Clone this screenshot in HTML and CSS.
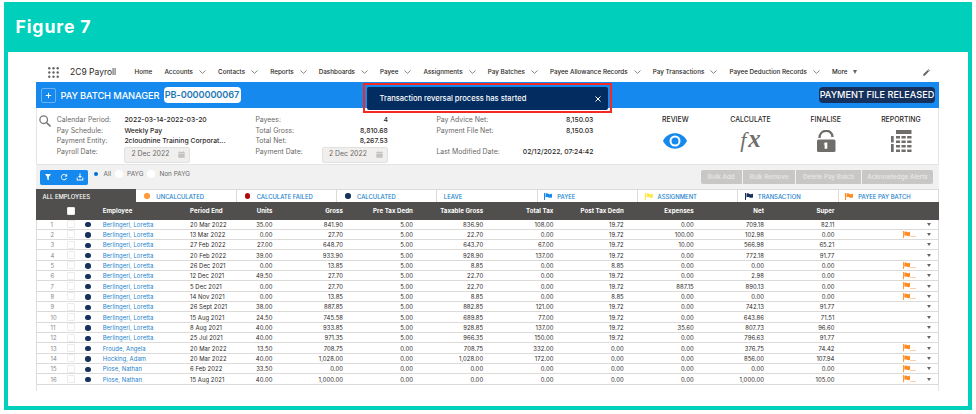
FILE: index.html
```
<!DOCTYPE html>
<html lang="en">

<head>
  <meta charset="UTF-8">
  <meta name="viewport" content="width=device-width, initial-scale=1.0">
  <title>2C9 Payroll</title>
  <link rel="stylesheet" href="styles.css">
</head>

<body>
  <!-- shared icons -->
  <svg class="sprite">
    <symbol id="chevron" viewBox="0 0 7 4"><path d="M.5 .5L3.5 3.3L6.500 .5" fill="none" stroke="#666" stroke-width=".8" /></symbol>
    <symbol id="flag" viewBox="0 0 8 8" preserveAspectRatio="none"><path d="M0 0H1V8H0ZM1.500 .7C3 .1 4 .5 4.700 1.100C5.600 1.600 6.800 1.400 8 .9V5C6.600 5.700 5.500 5.600 4.600 5.100C3.500 4.500 2.600 4.600 1.500 5.100Z" fill="currentColor" /></symbol>
    <symbol id="calendar" viewBox="0 0 7 7"><path d="M.3 1H6.700V2H.3ZM.3 2.500H6.700V6.800H.3ZM1.500 0H2.300V1H1.500ZM4.700 0H5.500V1H4.700Z" fill="#c4c2c0" /></symbol>
  </svg>

  <div class="figure">
    <h1 class="figure-title">Figure 7</h1>
    <div class="figure-body">
      <div class="app">
        <nav class="nav">
          <svg class="waffle" viewBox="0 0 11 11" fill="#666">
            <circle cx="1.300" cy="1.300" r="1.200" /><circle cx="5.500" cy="1.300" r="1.200" /><circle cx="9.700" cy="1.300" r="1.200" />
            <circle cx="1.300" cy="5.500" r="1.200" /><circle cx="5.500" cy="5.500" r="1.200" /><circle cx="9.700" cy="5.500" r="1.200" />
            <circle cx="1.300" cy="9.700" r="1.200" /><circle cx="5.500" cy="9.700" r="1.200" /><circle cx="9.700" cy="9.700" r="1.200" />
          </svg>
          <span class="app-name">2C9 Payroll</span>
          <span class="nav-item">Home</span>
          <span class="nav-item">Accounts <svg><use href="#chevron" /></svg></span>
          <span class="nav-item">Contacts <svg><use href="#chevron" /></svg></span>
          <span class="nav-item">Reports <svg><use href="#chevron" /></svg></span>
          <span class="nav-item">Dashboards <svg><use href="#chevron" /></svg></span>
          <span class="nav-item">Payee <svg><use href="#chevron" /></svg></span>
          <span class="nav-item">Assignments <svg><use href="#chevron" /></svg></span>
          <span class="nav-item">Pay Batches <svg><use href="#chevron" /></svg></span>
          <span class="nav-item">Payee Allowance Records <svg><use href="#chevron" /></svg></span>
          <span class="nav-item">Pay Transactions <svg><use href="#chevron" /></svg></span>
          <span class="nav-item">Payee Deduction Records <svg><use href="#chevron" /></svg></span>
          <span class="nav-item">More <i class="caret"></i></span>
          <svg class="pencil" viewBox="0 0 7 7"><path d="M0 7L.5 5L4.700 .9L6.100 2.300L2 6.500ZM5.100 .5L5.600 0L7 1.400L6.500 1.900Z" fill="#666" /></svg>
        </nav>

        <header class="banner">
          <svg class="plus" viewBox="0 0 15 15"><rect x=".5" y=".5" width="14" height="14" rx="1.500" fill="none" stroke="#7dbcf6" stroke-width=".8" /><path d="M7.500 4.800V10.200M4.800 7.500H10.200" stroke="#fff" stroke-width="1" /></svg>
          <span class="banner-title">PAY BATCH MANAGER</span>
          <span class="batch">PB-0000000067</span>
          <span class="status">PAYMENT FILE RELEASED</span>
          <div class="toast-outline">
            <div class="toast">
              <span>Transaction reversal process has started</span>
              <svg viewBox="0 0 6 6"><path d="M.5 .5L5.500 5.500M5.500 .5L.5 5.500" stroke="#fff" stroke-width="1" /></svg>
            </div>
          </div>
        </header>

        <section class="summary">
          <svg class="search" viewBox="0 0 12 12"><circle cx="4.700" cy="4.700" r="3.800" fill="none" stroke="#777" stroke-width="1.300" /><path d="M7.500 7.500L11 11" stroke="#777" stroke-width="1.700" stroke-linecap="round" /></svg>
          <dl class="facts facts-a">
            <dt>Calendar Period:</dt><dd>2022-03-14-2022-03-20</dd>
            <dt>Pay Schedule:</dt><dd>Weekly Pay</dd>
            <dt>Payment Entity:</dt><dd>2cloudnine Training Corporat...</dd>
            <dt>Payroll Date:</dt><dd class="date">2 Dec 2022 <svg><use href="#calendar" /></svg></dd>
          </dl>
          <dl class="facts facts-b">
            <dt>Payees:</dt><dd>4</dd>
            <dt>Total Gross:</dt><dd>8,810.68</dd>
            <dt>Total Net:</dt><dd>8,267.53</dd>
            <dt>Payment Date:</dt><dd class="date">2 Dec 2022 <svg><use href="#calendar" /></svg></dd>
          </dl>
          <dl class="facts facts-c">
            <dt>Pay Advice Net:</dt><dd>8,150.03</dd>
            <dt>Payment File Net:</dt><dd>8,150.03</dd>
            <dt></dt><dd></dd>
            <dt>Last Modified Date:</dt><dd>02/12/2022, 07:24:42</dd>
          </dl>
          <div class="actions">
            <div class="action">
              <span>REVIEW</span>
              <svg viewBox="0 0 24 22"><path d="M0 11C5 .8 19 .8 24 11C19 21.200 5 21.200 0 11Z" fill="#1589ee" /><circle cx="12" cy="11" r="5.500" fill="#fff" /><circle cx="12" cy="11" r="3.500" fill="#1589ee" /></svg>
            </div>
            <div class="action">
              <span>CALCULATE</span>
              <span class="fx"><i>f</i>x</span>
            </div>
            <div class="action">
              <span>FINALISE</span>
              <svg viewBox="0 0 24 22"><path d="M5.500 8C5.500 -1.300 18.500 -1.300 18.500 7" fill="none" stroke="#706e6b" stroke-width="2.400" /><rect x="3" y="9.500" width="18.500" height="12.500" rx="1.500" fill="#706e6b" /><path d="M10.600 12.500H13.300V18.700H10.600V14.500H9.800V13.500H10.600Z" fill="#fff" /></svg>
            </div>
            <div class="action">
              <span>REPORTING</span>
              <svg viewBox="0 0 24 22" fill="#706e6b"><path d="M7 0H22.500V4H7Z" /><path d="M2 6H4.700V12.500H2ZM2 14H4.700V22H2Z" /><path d="M7 6H11V8.500H7ZM12.500 6H16.700V8.500H12.500ZM18.200 6H22.500V8.500H18.200ZM7 10.400H11V13H7ZM12.500 10.400H16.700V13H12.500ZM18.200 10.400H22.500V13H18.200ZM7 15H11V17.500H7ZM12.500 15H16.700V17.500H12.500ZM18.200 15H22.500V17.500H18.200ZM7 19.400H11V22H7ZM12.500 19.400H16.700V22H12.500ZM18.200 19.400H22.500V22H18.200Z" /></svg>
            </div>
          </div>
        </section>

        <section class="toolbar">
          <div class="tools">
            <span><svg viewBox="0 0 8 8"><path d="M1 1H7L4.800 4V7.200L3.200 6.200V4Z" fill="#fff" /></svg></span>
            <span><svg viewBox="0 0 8 8"><path d="M6.300 2.600A2.700 2.700 0 1 0 6.600 5" fill="none" stroke="#fff" stroke-width="1" /><path d="M7.200 .8V3.600H4.500Z" fill="#fff" /></svg></span>
            <span><svg viewBox="0 0 8 8"><path d="M3.500 .5H4.500V3H6L4 5.300L2 3H3.500ZM.7 4.500H1.600V6.600H6.400V4.500H7.300V7.500H.7Z" fill="#fff" /></svg></span>
          </div>
          <div class="filters">
            <label class="checked"><i></i>All</label>
            <label><i></i>PAYG</label>
            <label><i></i>Non PAYG</label>
          </div>
          <div class="bulk">
            <span>Bulk Add</span><span>Bulk Remove</span><span>Delete Pay Batch</span><span>Acknowledge Alerts</span>
          </div>
        </section>

        <div class="tabs">
          <span class="tab active">ALL EMPLOYEES</span>
          <span class="tab"><i class="dot orange"></i>UNCALCULATED</span>
          <span class="tab"><i class="dot red"></i>CALCULATE FAILED</span>
          <span class="tab"><i class="dot navy"></i>CALCULATED</span>
          <span class="tab">LEAVE</span>
          <span class="tab"><svg class="flag blue"><use href="#flag" /></svg>PAYEE</span>
          <span class="tab"><svg class="flag yellow"><use href="#flag" /></svg>ASSIGNMENT</span>
          <span class="tab"><svg class="flag dark"><use href="#flag" /></svg>TRANSACTION</span>
          <span class="tab"><svg class="flag amber"><use href="#flag" /></svg>PAYEE PAY BATCH</span>
        </div>

        <div class="row head">
          <span></span><span><i class="check"></i></span><span></span><span>Employee</span><span>Period End</span>
          <span class="num">Units</span><span class="num">Gross</span><span class="num">Pre Tax Dedn</span><span class="num">Taxable Gross</span><span class="num">Total Tax</span>
          <span class="num">Post Tax Dedn</span><span class="num">Expenses</span><span class="num">Net</span><span class="num">Super</span>
        </div>
        <div id="rows"></div>
        <div class="app-end"></div>
      </div>
    </div>
  </div>

  <script src="script.js"></script>
</body>

</html>
```
FILE: styles.css
```
* {
  box-sizing: border-box;
}

body {
  margin: 0;
  padding: 2px 4px;
  background: #fff;
  color: #2b2826;
  font-family: Inter, 'Liberation Sans', sans-serif;
}

.sprite {
  display: none;
}

svg {
  display: block;
  flex: none;
}

.figure {
  height: 408px;
  border: 4px solid #00cfbb;
  border-top: 0;
  background: #00cfbb;
}

.figure-title {
  height: 50px;
  margin: 0;
  padding-left: 7.5px;
  color: #fff;
  font-size: 17.7px;
  font-weight: 700;
  letter-spacing: .85px;
  line-height: 49px;
}

.figure-body {
  height: 354px;
  padding: 10px 25px 0 28px;
  background: #fff;
}

.app {
  width: 903px;
}

/* navigation */
.nav {
  display: flex;
  align-items: center;
  height: 20px;
  padding-right: 9px;
}

.waffle {
  width: 11px;
  height: 11px;
  margin-left: 12px;
}

.app-name {
  width: 64.5px;
  margin-left: 11px;
  font-size: 8.5px;
  white-space: nowrap;
}

.nav-item {
  display: flex;
  align-items: center;
  gap: 6px;
  margin-right: 12.1px;
  font-size: 6.300px;
  font-weight: 500;
  white-space: nowrap;
}

.nav-item svg {
  width: 7px;
  height: 4px;
}

.caret {
  border: 2.8px solid transparent;
  border-top: 4px solid #666;
  border-bottom: 0;
}

.pencil {
  width: 7px;
  height: 7px;
  margin-left: auto;
}

/* banner */
.banner {
  position: relative;
  display: flex;
  align-items: center;
  height: 26px;
  padding: 0 4px 0 5px;
  background: #1589ee;
  color: #fff;
  white-space: nowrap;
}

.plus {
  width: 15px;
  height: 15px;
}

.banner-title {
  width: 103px;
  margin-left: 4.5px;
  font-size: 9.4px;
  font-weight: 500;
  letter-spacing: -.17px;
}

.batch,
.status {
  height: 16px;
  border-radius: 4px;
  line-height: 16px;
  text-align: center;
  font-weight: 500;
}

.batch {
  width: 77px;
  background: #fff;
  color: #1f78b4;
  font-size: 9.2px;
  font-weight: 600;
  letter-spacing: -.12px;
}

.status {
  width: 116px;
  margin-left: auto;
  background: #16325c;
  font-size: 9.2px;
}

.toast-outline {
  position: absolute;
  top: 1px;
  left: 327px;
  width: 249px;
  height: 30px;
  padding: 2px 2px 1px;
  border: 2px solid #f42a22;
}

.toast {
  display: flex;
  align-items: center;
  justify-content: space-between;
  height: 23px;
  padding: 0 7px 0 12.5px;
  border-radius: 2px;
  background: #032d60;
  font-size: 7.55px;
  font-weight: 500;
}

.toast svg {
  width: 6px;
  height: 6px;
}

/* summary */
.summary {
  display: flex;
  height: 56px;
  border: solid #e4e4e4;
  border-width: 0 1px;
}

.search {
  width: 12px;
  height: 12px;
  margin: 6.500px 0 0 2px;
}

.facts {
  display: grid;
  grid-template-rows: 10.5px 10.5px 10.5px 16px;
  align-content: start;
  margin: 7px 0 0;
  font-size: 6.9px;
  line-height: 10.5px;
  white-space: nowrap;
}

.facts dt {
  color: #6b6967;
}

.facts dd {
  margin: 0;
  font-size: 6.8px;
  font-weight: 500;
}

.facts-a {
  grid-template-columns: 67.7px 131px;
  margin-left: 5.7px;
}

.facts-b {
  grid-template-columns: 66.5px 66px;
}

.facts-c {
  grid-template-columns: 80px 77px;
  margin-left: 48.5px;
}

.facts-b dd:not(.date),
.facts-c dd {
  justify-self: end;
}

.facts .date {
  display: flex;
  align-items: center;
  justify-content: space-between;
  width: 66px;
  height: 16px;
  padding: 0 4px 0 6px;
  border: 1px solid #e2e1e0;
  border-radius: 2px;
  background: #f0efee;
  color: #6b6967;
  font-size: 6.9px;
  font-weight: 400;
}

.date svg {
  width: 7px;
  height: 7px;
}

.actions {
  display: flex;
  margin: 0 -.5px 0 auto;
}

.action {
  display: flex;
  flex-direction: column;
  align-items: center;
  width: 75.2px;
  padding-top: 7px;
  font-size: 6.9px;
  font-weight: 500;
  line-height: 10px;
}

.action svg {
  width: 24px;
  height: 22px;
  margin-top: 5px;
}

.fx {
  margin-top: 4px;
  color: #706e6b;
  font: italic 700 25px/20px 'Liberation Serif', serif;
}

.fx i {
  margin-right: 2px;
  font-size: 22px;
  font-weight: 400;
}

/* toolbar */
.toolbar {
  display: flex;
  height: 25px;
  padding: 4.5px 6px 0 4px;
  border-top: 1px solid #e4e4e4;
  background: #f1f1f1;
  white-space: nowrap;
}

.tools {
  display: flex;
  gap: .5px;
  width: 47.5px;
  height: 15px;
  border-radius: 2px;
  background: #7dbcf6;
  overflow: hidden;
}

.tools span {
  display: grid;
  flex: 1;
  place-items: center;
  background: #1589ee;
}

.tools svg {
  width: 8px;
  height: 8px;
}

.filters {
  display: flex;
  height: 9px;
  margin-left: 4px;
}

.filters label {
  display: flex;
  align-items: center;
  gap: 4px;
  margin-right: 4px;
  color: #6b6967;
  font-size: 6.4px;
}

.filters i {
  width: 8px;
  height: 8px;
  border-radius: 50%;
  background: #fff;
}

.filters .checked i {
  width: 4px;
  height: 4px;
  margin: 0 2px;
  background: #0070d2;
}

.bulk {
  display: flex;
  gap: 1px;
  height: 14.5px;
  margin-left: auto;
}

.bulk span {
  width: 41.5px;
  background: #c9c7c5;
  color: #e9e8e7;
  font-size: 6.3px;
  font-weight: 500;
  line-height: 14.5px;
  text-align: center;
}

.bulk span:nth-child(2) {
  width: 52px;
}

.bulk span:nth-child(3) {
  width: 65px;
}

.bulk span:nth-child(4) {
  width: 71px;
  border-radius: 0 2px 2px 0;
}

.bulk span:first-child {
  border-radius: 2px 0 0 2px;
}

/* tabs */
.tabs {
  display: grid;
  grid-template-columns: repeat(9, 1fr);
  height: 13px;
}

.tab {
  display: flex;
  align-items: center;
  padding-left: 6.5px;
  border: solid #dddbda;
  border-width: 1px 1px 0 0;
  color: #1b7fcc;
  font-size: 5.9px;
  font-weight: 500;
  white-space: nowrap;
}

.tab.active {
  border-color: #514f4d;
  background: #514f4d;
  color: #fff;
}

.dot {
  width: 5.5px;
  height: 5.5px;
  margin: 0 6.5px 0 1.5px;
  border-radius: 50%;
}

.flag {
  width: 8px;
  height: 7px;
  margin-right: 5px;
}

.orange {
  background: #ff9a3c;
}

.red {
  background: #b00a0a;
}

.navy {
  background: #16325c;
}

.blue {
  color: #1589ee;
}

.yellow {
  color: #ffe94a;
}

.dark {
  color: #16325c;
}

.amber {
  color: #ff8a1f;
}

/* employee rows */
.row {
  display: grid;
  grid-template-columns: 29px 13px 23.7px 87.3px 41px 41.5px 70.5px 70px 70.2px 70.3px 70.3px 70px 70.2px 70.5px 68.5px 21px 15px;
  align-items: center;
  height: 10.34px;
  border: solid #dddbda;
  border-width: 0 1px 1px;
  font-size: 5.9px;
  letter-spacing: .06px;
  white-space: nowrap;
}

.row > :first-child {
  padding-left: 13.5px;
  color: #8a8886;
}

.row.head {
  height: 17.5px;
  padding-top: 1px;
  border-color: #514f4d;
  background: #514f4d;
  color: #fff;
  font-size: 6.1px;
  font-weight: 700;
}

.num {
  text-align: right;
}

.check {
  display: block;
  width: 8px;
  height: 8px;
  margin-left: .5px;
  border: 1px solid #ecebea;
  border-radius: 1px;
  background: #fff;
}

.row .dot {
  display: block;
  margin: 1px 0 0 6px;
}

.row .name {
  color: #1b7fcc;
}

.alert {
  display: flex;
  align-items: center;
  color: #ff8a1f;
  font-weight: 700;
}

.alert .flag {
  width: 7px;
  height: 7.5px;
  margin: 0;
}

.row .caret {
  justify-self: start;
  margin-left: 3px;
  border-width: 3px 2.2px 0;
}

.app-end {
  height: 6px;
  border: solid #e4e4e4;
  border-width: 0 1px;
}
```
FILE: script.js
```
// employee, period end, units, gross, pre tax, taxable, tax, post tax, expenses, net, super, flagged
var employees = [
  ['Berlingeri, Loretta', '20 Mar 2022', '35.00', '841.90', '5.00', '836.90', '108.00', '19.72', '0.00', '709.18', '82.11', false],
  ['Berlingeri, Loretta', '13 Mar 2022', '0.00', '27.70', '5.00', '22.70', '0.00', '19.72', '100.00', '102.98', '0.00', true],
  ['Berlingeri, Loretta', '27 Feb 2022', '27.00', '648.70', '5.00', '643.70', '67.00', '19.72', '10.00', '566.98', '65.21', false],
  ['Berlingeri, Loretta', '20 Feb 2022', '39.00', '933.90', '5.00', '928.90', '137.00', '19.72', '0.00', '772.18', '91.77', false],
  ['Berlingeri, Loretta', '26 Dec 2021', '0.00', '13.85', '5.00', '8.85', '0.00', '8.85', '0.00', '0.00', '0.00', true],
  ['Berlingeri, Loretta', '12 Dec 2021', '49.50', '27.70', '5.00', '22.70', '0.00', '19.72', '0.00', '2.98', '0.00', true],
  ['Berlingeri, Loretta', '5 Dec 2021', '0.00', '27.70', '5.00', '22.70', '0.00', '19.72', '887.15', '890.13', '0.00', true],
  ['Berlingeri, Loretta', '14 Nov 2021', '0.00', '13.85', '5.00', '8.85', '0.00', '8.85', '0.00', '0.00', '0.00', true],
  ['Berlingeri, Loretta', '26 Sept 2021', '38.00', '887.85', '5.00', '882.85', '121.00', '19.72', '0.00', '742.13', '91.77', false],
  ['Berlingeri, Loretta', '15 Aug 2021', '24.50', '745.58', '5.00', '689.85', '77.00', '19.72', '0.00', '643.86', '71.51', false],
  ['Berlingeri, Loretta', '8 Aug 2021', '40.00', '933.85', '5.00', '928.85', '137.00', '19.72', '35.60', '807.73', '96.60', false],
  ['Berlingeri, Loretta', '25 Jul 2021', '40.00', '971.35', '5.00', '966.35', '150.00', '19.72', '0.00', '796.63', '91.77', false],
  ['Froude, Angela', '20 Mar 2022', '13.50', '708.75', '0.00', '708.75', '332.00', '0.00', '0.00', '376.75', '74.42', true],
  ['Hocking, Adam', '20 Mar 2022', '40.00', '1,028.00', '0.00', '1,028.00', '172.00', '0.00', '0.00', '856.00', '107.94', true],
  ['Piose, Nathan', '6 Feb 2022', '33.50', '0.00', '0.00', '0.00', '0.00', '0.00', '0.00', '0.00', '0.00', true],
  ['Piose, Nathan', '15 Aug 2021', '40.00', '1,000.00', '0.00', '0.00', '0.00', '0.00', '0.00', '1,000.00', '105.00', true]
];

var html = '';
employees.forEach(function (e, index) {
  var amounts = e.slice(2, 11).map(function (value) {
    return `<span class="num">${value}</span>`;
  }).join('');
  var flag = e[11] ? '<svg class="flag amber"><use href="#flag" /></svg>...' : '';
  html += `<div class="row">
    <span>${index + 1}</span>
    <span><i class="check"></i></span>
    <span><i class="dot navy"></i></span>
    <span class="name">${e[0]}</span>
    <span>${e[1]}</span>
    ${amounts}
    <span></span>
    <span class="alert">${flag}</span>
    <i class="caret"></i>
  </div>`;
});
document.getElementById('rows').innerHTML = html;
```
